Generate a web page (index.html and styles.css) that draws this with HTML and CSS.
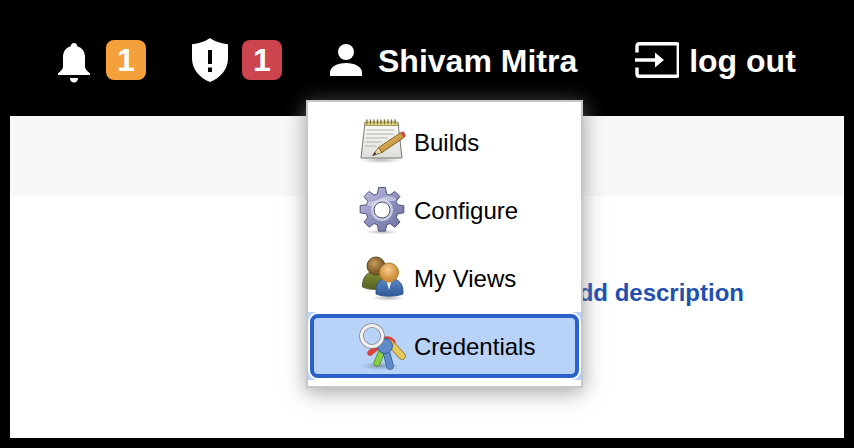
FILE: index.html
```html
<!DOCTYPE html>
<html lang="en">
<head>
<meta charset="utf-8">
<title>Jenkins</title>
<link rel="stylesheet" href="styles.css">
</head>
<body>
<header class="topbar">
  <a class="nav-group nav-bell">
    <svg class="ico-bell" viewBox="0 0 32 40"><path fill="#fff" d="M16 0c2 0 3.200 1.300 3.200 3.200 5.300 1.400 7.800 5.700 7.800 11v9.300c0 2.700 2.200 4.700 5 6.700v1.800H0v-1.800c2.800-2 5-4 5-6.700v-9.300c0-5.300 2.500-9.600 7.800-11C12.800 1.300 14 0 16 0z"/><path fill="#fff" d="M12 35h8c0 2.800-1.700 4.500-4 4.500s-4-1.700-4-4.500z"/></svg>
    <span class="badge badge-warn">1</span>
  </a>
  <a class="nav-group nav-shield">
    <svg class="ico-shield" viewBox="0 0 36 44"><path fill="#fff" fill-rule="evenodd" d="M18 0c4 3 9 5.200 18 6.300v14.200C36 31 29 39.500 18 44 7 39.500 0 31 0 20.500V6.300C9 5.200 14 3 18 0zM16 12v14h4V12zM16 29.500v4.500h4v-4.500z"/></svg>
    <span class="badge badge-danger">1</span>
  </a>
  <a class="nav-group nav-user">
    <svg class="ico-user" viewBox="0 0 32 32"><circle cx="16" cy="8" r="8" fill="#fff"/><path fill="#fff" d="M0 32v-3.500C0 23 7 19 16 19s16 4 16 9.500V32z"/></svg>
    <span class="nav-text">Shivam Mitra</span>
  </a>
  <a class="nav-group nav-logout">
    <svg class="ico-logout" viewBox="0 0 44 36"><path fill="none" stroke="#fff" stroke-width="3.400" stroke-linejoin="round" d="M2 10.500V4.200C2 2.800 2.800 1.700 4.200 1.700h37.400c.9 0 1.700.8 1.700 1.700v29.200c0 .9-.8 1.700-1.700 1.700H4.200c-1.400 0-2.200-1.100-2.200-2.500v-6.300"/><path fill="#fff" d="M0 16.300h20v-5.800l9 7.500-9 7.500v-5.800H0z"/></svg>
    <span class="nav-text">log out</span>
  </a>
</header>

<main class="panel">
  <div class="panel-band"></div>
  <div class="panel-actions"><a class="add-link">add description</a></div>
</main>

<nav class="menu">
  <a class="menu-item">
    <svg class="menu-ico" viewBox="0 0 48 48">
      <defs>
        <linearGradient id="paper" x1="0" y1="0" x2="0" y2="1"><stop offset="0" stop-color="#fbfbf8"/><stop offset="1" stop-color="#dededa"/></linearGradient>
        <linearGradient id="pencil" x1="0" y1="0" x2="1" y2="1"><stop offset="0" stop-color="#f3cf7a"/><stop offset="1" stop-color="#a9751f"/></linearGradient>
        <radialGradient id="ground"><stop offset="0" stop-color="#000" stop-opacity=".28"/><stop offset="1" stop-color="#000" stop-opacity="0"/></radialGradient>
      </defs>
      <ellipse cx="23" cy="41" rx="21" ry="3.500" fill="url(#ground)"/>
      <path d="M7 3.500h33l4 35.500H3z" fill="url(#paper)" stroke="#77776f" stroke-width="1"/>
      <path d="M7 3h33v3.500H6.600z" fill="#e9d98f" stroke="#8f8542" stroke-width=".8"/>
      <path d="M9 .8v4M12.500 .8v4M16 .8v4M19.500 .8v4M23 .8v4M26.500 .8v4M30 .8v4M33.500 .8v4M37 .8v4" stroke="#7c7230" stroke-width="1.300" stroke-linecap="round"/>
      <path d="M8.500 11h28M8 15h28M7.800 19h22M7.500 23h16M7 27h11" stroke="#b4b4ae" stroke-width="1.100"/>
      <path d="M43 13.500l3 5L24 33.500l-3.500-5z" fill="url(#pencil)" stroke="#6e4a12" stroke-width=".8"/>
      <path d="M43 13.500l3 5 1.500-1c.8-1.500-1.500-5.500-3-5z" fill="#cf4a45"/>
      <path d="M20.500 28.500l3.500 5-9.500 3.200z" fill="#ecd5a6" stroke="#6e4a12" stroke-width=".7"/>
      <path d="M16.800 32.900l1.700 2.300-4 1.500z" fill="#333"/>
    </svg>
    <span>Builds</span>
  </a>
  <a class="menu-item">
    <svg class="menu-ico" viewBox="0 0 48 48">
      <defs>
        <linearGradient id="gear" x1="0" y1="0" x2="1" y2="1"><stop offset="0" stop-color="#c4c6e2"/><stop offset=".5" stop-color="#8f92c0"/><stop offset="1" stop-color="#6d6f9f"/></linearGradient>
      </defs>
      <ellipse cx="24" cy="45" rx="17" ry="2.500" fill="url(#ground)"/>
      <g transform="translate(0 -1)">
        <path fill-rule="evenodd" fill="url(#gear)" stroke="#50527a" stroke-width="1" d="M20.500 1.500h7l1 6.200 3.400 1.400 5-3.700 5 5-3.700 5 1.400 3.400 6.200 1v7l-6.200 1-1.400 3.400 3.700 5-5 5-5-3.700-3.400 1.400-1 6.200h-7l-1-6.200-3.400-1.400-5 3.700-5-5 3.700-5-1.400-3.400-6.200-1v-7l6.200-1 1.400-3.400-3.700-5 5-5 5 3.700 3.400-1.400z"/>
        <path d="M9 17c5-3 10-1 14-5 5-2 11-3 15 1 1 3-6 1-11 3-5 1-7 5-12 4-3 0-5 0-6-3z" fill="#e4e5f3" opacity=".55"/>
        <circle cx="24" cy="24" r="11" fill="#d9daec" opacity=".8"/>
        <circle cx="24" cy="24" r="8" fill="#fff" stroke="#50527a" stroke-width="1"/>
      </g>
    </svg>
    <span>Configure</span>
  </a>
  <a class="menu-item">
    <svg class="menu-ico" viewBox="0 0 48 48">
      <defs>
        <radialGradient id="headA" cx=".4" cy=".35"><stop offset="0" stop-color="#c79c5c"/><stop offset="1" stop-color="#7e5a28"/></radialGradient>
        <radialGradient id="headB" cx=".45" cy=".35"><stop offset="0" stop-color="#f6cf92"/><stop offset="1" stop-color="#d18f3a"/></radialGradient>
        <linearGradient id="bodyA" x1="0" y1="0" x2="0" y2="1"><stop offset="0" stop-color="#7f8a38"/><stop offset="1" stop-color="#566220"/></linearGradient>
        <linearGradient id="bodyB" x1="0" y1="0" x2="0" y2="1"><stop offset="0" stop-color="#5a84c0"/><stop offset="1" stop-color="#2f5a9c"/></linearGradient>
      </defs>
      <ellipse cx="30" cy="43" rx="17" ry="3" fill="url(#ground)"/>
      <path d="M4.500 30c0-6 3-11 8-13h11c4 1.500 6 5 6 10v6c-8 2-19 2-25-1z" fill="url(#bodyA)" stroke="#4b521f" stroke-width=".8"/>
      <circle cx="18" cy="11" r="9" fill="url(#headA)" stroke="#5e4520" stroke-width="1"/>
      <path d="M18 36c0-6 2-10 7-12h12c5 2 8 6 8 12v3c-8 3-20 3-27 0z" fill="url(#bodyB)" stroke="#274a80" stroke-width=".8"/>
      <path d="M28 24h6l-3 11z" fill="#f1f1f1"/>
      <circle cx="31" cy="17.500" r="9.500" fill="url(#headB)" stroke="#b27b2f" stroke-width="1"/>
    </svg>
    <span>My Views</span>
  </a>
  <a class="menu-item is-active">
    <svg class="menu-ico" viewBox="0 0 48 48">
      <ellipse cx="22" cy="43" rx="20" ry="4" fill="url(#ground)"/>
      <path d="M34 22l10 11" stroke="#8f7a25" stroke-width="7.500" stroke-linecap="round"/>
      <path d="M34 22l10 11" stroke="#e6c95c" stroke-width="6" stroke-linecap="round"/>
      <path d="M12 30l10-8" stroke="#d8443a" stroke-width="5.500" stroke-linecap="round"/>
      <path d="M19 23a10 10 0 0 1 19-4l-7 7z" fill="#d8443a"/>
      <path d="M21 23a8.500 8.500 0 0 1 16-2l-6 6z" fill="#e8b33c"/>
      <path d="M21 25a6 6 0 0 1 10-5l-4 8z" fill="#7fc63f"/>
      <path d="M24 28l-5 12" stroke="#4f8a20" stroke-width="7" stroke-linecap="round"/>
      <path d="M24 28l-5 12" stroke="#84cf43" stroke-width="5.500" stroke-linecap="round"/>
      <path d="M27 24l5 19" stroke="#2f5a9a" stroke-width="7.500" stroke-linecap="round"/>
      <path d="M27 24l5 19" stroke="#5f8cc8" stroke-width="6" stroke-linecap="round"/>
      <circle cx="27" cy="23" r="7.500" fill="#5f8cc8" stroke="#2f5a9a" stroke-width=".9"/>
      <circle cx="14" cy="13" r="10.500" fill="none" stroke="#858585" stroke-width="4.600"/>
      <circle cx="14" cy="13" r="10.500" fill="none" stroke="#f2f2f2" stroke-width="3"/>
    </svg>
    <span>Credentials</span>
  </a>
</nav>
</body>
</html>
```
FILE: styles.css
```css
* { box-sizing: border-box; }

html, body {
  margin: 0;
  height: 100%;
}

body {
  width: 854px;
  height: 448px;
  overflow: hidden;
  background: #000;
  font-family: "Liberation Sans", Arial, sans-serif;
  display: flex;
  flex-direction: column;
}

.topbar {
  height: 116px;
  flex: none;
  display: flex;
  align-items: flex-start;
  padding: 38px 0 0 58px;
  color: #fff;
}

.nav-group {
  display: flex;
  align-items: center;
  height: 44px;
}

.nav-text {
  font-size: 32px;
  font-weight: 700;
  line-height: 46px;
  padding-top: 2px;
}

.nav-bell { gap: 16px; }
.nav-shield { gap: 14px; margin-left: 46px; }
.nav-user { gap: 16px; margin-left: 48px; }
.nav-logout { gap: 10px; margin-left: 58px; }

.ico-bell { width: 32px; height: 40px; margin-top: 5px; }
.ico-shield { width: 36px; height: 44px; }
.ico-user { width: 32px; height: 32px; }
.ico-logout { width: 44px; height: 36px; }

.badge {
  width: 40px;
  height: 40px;
  border-radius: 8px;
  display: flex;
  align-items: center;
  justify-content: center;
  font-size: 32px;
  font-weight: 700;
  color: #fff;
}

.badge-warn { background: #f4a13c; }
.badge-danger { background: #cc444e; }

.panel {
  flex: 1;
  margin: 0 10px 10px;
  background: #fff;
}

.panel-band {
  height: 80px;
  background: #f8f8f8;
}

.panel-actions {
  padding: 83px 100px 0 0;
  text-align: right;
}

.add-link {
  color: #204fb0;
  font-size: 24px;
  font-weight: 700;
  line-height: 28px;
}

.menu {
  position: absolute;
  left: 306px;
  top: 100px;
  width: 277px;
  height: 288px;
  padding: 6px 0;
  background: #fff;
  border: 2px solid #c3c8c8;
  box-shadow: 0 4px 20px rgba(128, 128, 128, 0.75);
}

.menu-item {
  height: 68px;
  display: flex;
  align-items: center;
  gap: 8px;
  padding: 2px 0 0 50px;
  font-size: 24px;
  color: #000;
}

.menu-ico {
  width: 48px;
  height: 48px;
  flex: none;
}

.is-active {
  background: #b8d2f8;
  position: relative;
}

.is-active::before {
  content: "";
  position: absolute;
  inset: 2px;
  border: 4px solid #2a60c8;
  border-radius: 8px;
  box-shadow: 0 0 0 2px #fff;
}
```
